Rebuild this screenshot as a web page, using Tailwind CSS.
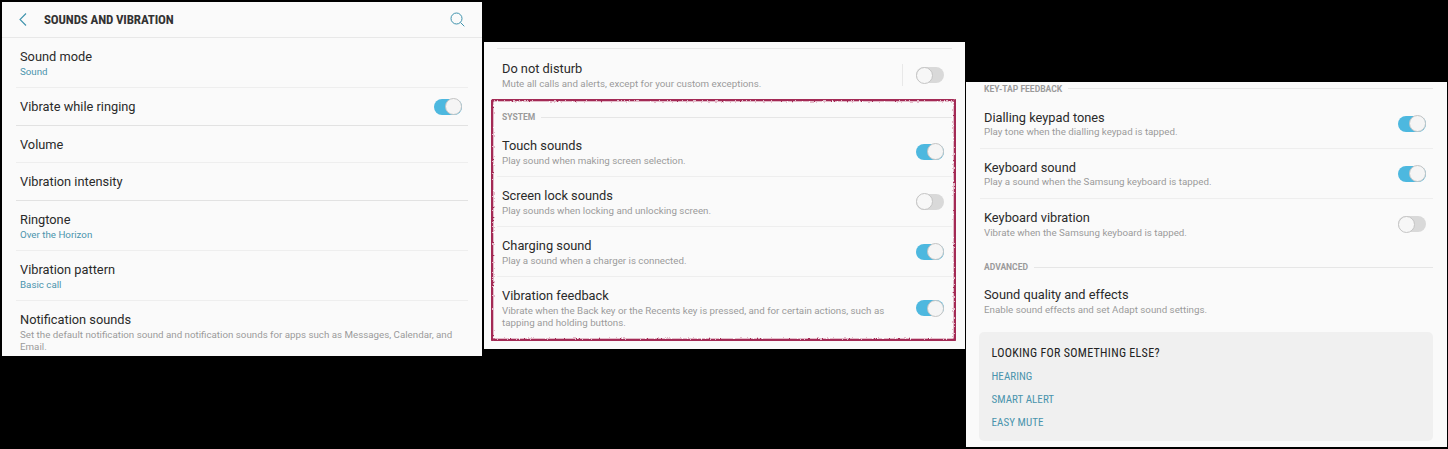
<!DOCTYPE html>
<html lang="en">

<head>
  <meta charset="UTF-8">
  <meta name="viewport" content="width=device-width, initial-scale=1.0">
  <title>sounds and vibration</title>
  <script src="https://cdn.jsdelivr.net/npm/@tailwindcss/browser@4"></script>
</head>

<body class="bg-black">
  <div class="flex items-start h-[449px] overflow-hidden font-['Roboto',sans-serif] text-[12.8px] leading-4 text-[#2a2a2a]">

    <!-- left panel -->
    <section class="w-[480px] h-[354px] mt-[2px] ml-[2px] bg-[#fafafa] overflow-hidden">
      <header class="flex items-center h-[36px] px-[17px] border-b border-[#e8e8e8]">
        <svg class="w-[8px] h-[13px]" viewBox="0 0 8 13" fill="none" stroke="#3f93ad" stroke-width="1.1"><path d="M7 .5 1 6.5l6 6" /></svg>
        <h1 class="ml-[17px] pt-px text-[13px] font-bold font-stretch-condensed tracking-[-0.15px] text-[#333]">SOUNDS AND VIBRATION</h1>
        <svg class="ml-auto w-[15px] h-[15px]" viewBox="0 0 15 15" fill="none" stroke="#3f93ad" stroke-width="1"><circle cx="6.5" cy="6.5" r="5.5" /><path d="m10.5 10.5 3.8 3.8" /></svg>
      </header>
      <div class="mx-[14px]">
        <div class="h-[50px] pl-[4px] pt-[11px] border-b border-[#eeeeee]">
          <div>Sound mode</div>
          <div class="mt-px text-[9.75px] leading-3 text-[#4a94ad]">Sound</div>
        </div>
        <div class="flex items-center justify-between h-[38px] pl-[4px] pr-[6px] border-b border-[#e2e2e2]">
          <div class="pt-[1px]">Vibrate while ringing</div>
          <div class="relative w-[28px] h-[16px] rounded-full bg-[#4db8df]"><span class="absolute right-0 -top-[0.5px] w-[17px] h-[17px] rounded-full bg-[#f5f5f5] border border-[#c4c4c4]"></span></div>
        </div>
        <div class="flex items-center h-[37px] pl-[4px] pt-[1px] border-b border-[#eeeeee]">Volume</div>
        <div class="flex items-center h-[38px] pl-[4px] pt-[1px] border-b border-[#e2e2e2]">Vibration intensity</div>
        <div class="h-[50px] pl-[4px] pt-[11px] border-b border-[#eeeeee]">
          <div>Ringtone</div>
          <div class="mt-px text-[9.75px] leading-3 text-[#4a94ad]">Over the Horizon</div>
        </div>
        <div class="h-[50px] pl-[4px] pt-[11px] border-b border-[#eeeeee]">
          <div>Vibration pattern</div>
          <div class="mt-px text-[9.75px] leading-3 text-[#4a94ad]">Basic call</div>
        </div>
        <div class="pl-[4px] pt-[11px]">
          <div>Notification sounds</div>
          <div class="mt-px text-[9.75px] leading-3 text-[#9a9a9a]">Set the default notification sound and notification sounds for apps such as Messages, Calendar, and Email.</div>
        </div>
      </div>
    </section>

    <!-- middle panel -->
    <section class="relative w-[481px] h-[307px] mt-[42px] ml-[2px] bg-[#fafafa] overflow-hidden">
      <div class="mx-[13px]">
        <div class="h-[7px] border-b border-[#e6e6e6]"></div>
        <div class="flex justify-between h-[62px] pl-[5px] pr-[8px] pt-[12px]">
          <div>
            <div>Do not disturb</div>
            <div class="mt-px text-[9.75px] leading-3 text-[#9a9a9a]">Mute all calls and alerts, except for your custom exceptions.</div>
          </div>
          <div class="flex items-start h-[22px] mt-[3px]">
            <span class="w-px h-[22px] bg-[#e8e8e8] mr-[13px]"></span>
            <div class="relative w-[28px] h-[16px] mt-[3px] rounded-full bg-[#d9d9d9]"><span class="absolute left-0 -top-[0.5px] w-[17px] h-[17px] rounded-full bg-[#f7f7f7] border border-[#c4c4c4]"></span></div>
          </div>
        </div>
        <div class="flex items-center gap-[6px] h-[12px] pl-[5px] mb-[4px] text-[8.5px] font-bold text-[#9a9a9a]">
          <span>SYSTEM</span><span class="flex-1 h-px bg-[#e6e6e6]"></span>
        </div>
        <div class="flex items-center justify-between h-[50px] pl-[5px] pr-[8px] border-b border-[#eeeeee]">
          <div class="pt-[2px]">
            <div>Touch sounds</div>
            <div class="mt-px text-[9.75px] leading-3 text-[#9a9a9a]">Play sound when making screen selection.</div>
          </div>
          <div class="relative w-[28px] h-[16px] rounded-full bg-[#4db8df]"><span class="absolute right-0 -top-[0.5px] w-[17px] h-[17px] rounded-full bg-[#f5f5f5] border border-[#c4c4c4]"></span></div>
        </div>
        <div class="flex items-center justify-between h-[50px] pl-[5px] pr-[8px] border-b border-[#eeeeee]">
          <div class="pt-[2px]">
            <div>Screen lock sounds</div>
            <div class="mt-px text-[9.75px] leading-3 text-[#9a9a9a]">Play sounds when locking and unlocking screen.</div>
          </div>
          <div class="relative w-[28px] h-[16px] rounded-full bg-[#d9d9d9]"><span class="absolute left-0 -top-[0.5px] w-[17px] h-[17px] rounded-full bg-[#f7f7f7] border border-[#c4c4c4]"></span></div>
        </div>
        <div class="flex items-center justify-between h-[50px] pl-[5px] pr-[8px] border-b border-[#eeeeee]">
          <div class="pt-[2px]">
            <div>Charging sound</div>
            <div class="mt-px text-[9.75px] leading-3 text-[#9a9a9a]">Play a sound when a charger is connected.</div>
          </div>
          <div class="relative w-[28px] h-[16px] rounded-full bg-[#4db8df]"><span class="absolute right-0 -top-[0.5px] w-[17px] h-[17px] rounded-full bg-[#f5f5f5] border border-[#c4c4c4]"></span></div>
        </div>
        <div class="flex justify-between pl-[5px] pr-[8px] pt-[11px]">
          <div class="w-[395px]">
            <div>Vibration feedback</div>
            <div class="mt-px text-[9.75px] leading-3 text-[#9a9a9a]">Vibrate when the Back key or the Recents key is pressed, and for certain actions, such as tapping and holding buttons.</div>
          </div>
          <div class="relative w-[28px] h-[16px] mt-[12px] rounded-full bg-[#4db8df]"><span class="absolute right-0 -top-[0.5px] w-[17px] h-[17px] rounded-full bg-[#f5f5f5] border border-[#c4c4c4]"></span></div>
        </div>
      </div>
      <!-- hand drawn highlight -->
      <svg class="absolute left-0 top-0 w-[481px] h-[307px] pointer-events-none" viewBox="0 0 481 307" fill="none">
        <filter id="rough" x="0" y="0" width="100%" height="100%"><feTurbulence type="fractalNoise" baseFrequency="0.6" numOctaves="2" seed="4" /><feDisplacementMap in="SourceGraphic" scale="3" xChannelSelector="R" yChannelSelector="G" /></filter>
        <rect x="7.5" y="57.5" width="464" height="241" rx="3" stroke="#dba6b9" stroke-width="4.5" filter="url(#rough)" />
        <rect x="7.5" y="57.5" width="464" height="241" rx="3" stroke="#a32a55" stroke-width="3" filter="url(#rough)" />
      </svg>
    </section>

    <!-- right panel -->
    <section class="w-[481px] h-[365px] mt-[82px] ml-[1px] bg-[#fafafa] overflow-hidden">
      <div class="mx-[14px]">
        <div class="flex items-center gap-[6px] h-[12px] pt-px pl-[4px] mb-[5px] text-[8.5px] font-bold text-[#9a9a9a]">
          <span>KEY-TAP FEEDBACK</span><span class="flex-1 h-px bg-[#e6e6e6]"></span>
        </div>
        <div class="flex items-center justify-between h-[50px] pl-[4px] pr-[7px] border-b border-[#eeeeee]">
          <div class="pt-px">
            <div>Dialling keypad tones</div>
            <div class="text-[9.75px] leading-3 text-[#9a9a9a]">Play tone when the dialling keypad is tapped.</div>
          </div>
          <div class="relative w-[28px] h-[16px] rounded-full bg-[#4db8df]"><span class="absolute right-0 -top-[0.5px] w-[17px] h-[17px] rounded-full bg-[#f5f5f5] border border-[#c4c4c4]"></span></div>
        </div>
        <div class="flex items-center justify-between h-[50px] pl-[4px] pr-[7px] border-b border-[#eeeeee]">
          <div class="pt-px">
            <div>Keyboard sound</div>
            <div class="text-[9.75px] leading-3 text-[#9a9a9a]">Play a sound when the Samsung keyboard is tapped.</div>
          </div>
          <div class="relative w-[28px] h-[16px] rounded-full bg-[#4db8df]"><span class="absolute right-0 -top-[0.5px] w-[17px] h-[17px] rounded-full bg-[#f5f5f5] border border-[#c4c4c4]"></span></div>
        </div>
        <div class="flex items-center justify-between h-[50px] pl-[4px] pr-[7px]">
          <div>
            <div>Keyboard vibration</div>
            <div class="mt-px text-[9.75px] leading-3 text-[#9a9a9a]">Vibrate when the Samsung keyboard is tapped.</div>
          </div>
          <div class="relative w-[28px] h-[16px] rounded-full bg-[#d9d9d9]"><span class="absolute left-0 -top-[0.5px] w-[17px] h-[17px] rounded-full bg-[#f7f7f7] border border-[#c4c4c4]"></span></div>
        </div>
        <div class="flex items-center gap-[6px] h-[12px] mt-[12px] pl-[4px] text-[8.5px] font-bold text-[#9a9a9a]">
          <span>ADVANCED</span><span class="flex-1 h-px bg-[#e6e6e6]"></span>
        </div>
        <div class="h-[59px] pl-[4px] pt-[14px]">
          <div>Sound quality and effects</div>
          <div class="mt-px text-[9.75px] leading-3 text-[#9a9a9a]">Enable sound effects and set Adapt sound settings.</div>
        </div>
      </div>
      <div class="w-[454px] h-[109px] ml-[13px] px-[12.5px] pt-[13px] rounded-[5px] bg-[#f0f0f0]">
        <div class="text-[12px] text-[#222] font-stretch-condensed tracking-[0.3px]">LOOKING FOR SOMETHING ELSE?</div>
        <div class="flex flex-col gap-[7px] mt-[7px] pt-px text-[11px] font-stretch-condensed tracking-[0.05px] text-[#4a94ad]">
          <div>HEARING</div>
          <div>SMART ALERT</div>
          <div>EASY MUTE</div>
        </div>
      </div>
    </section>
  </div>
</body>

</html>
